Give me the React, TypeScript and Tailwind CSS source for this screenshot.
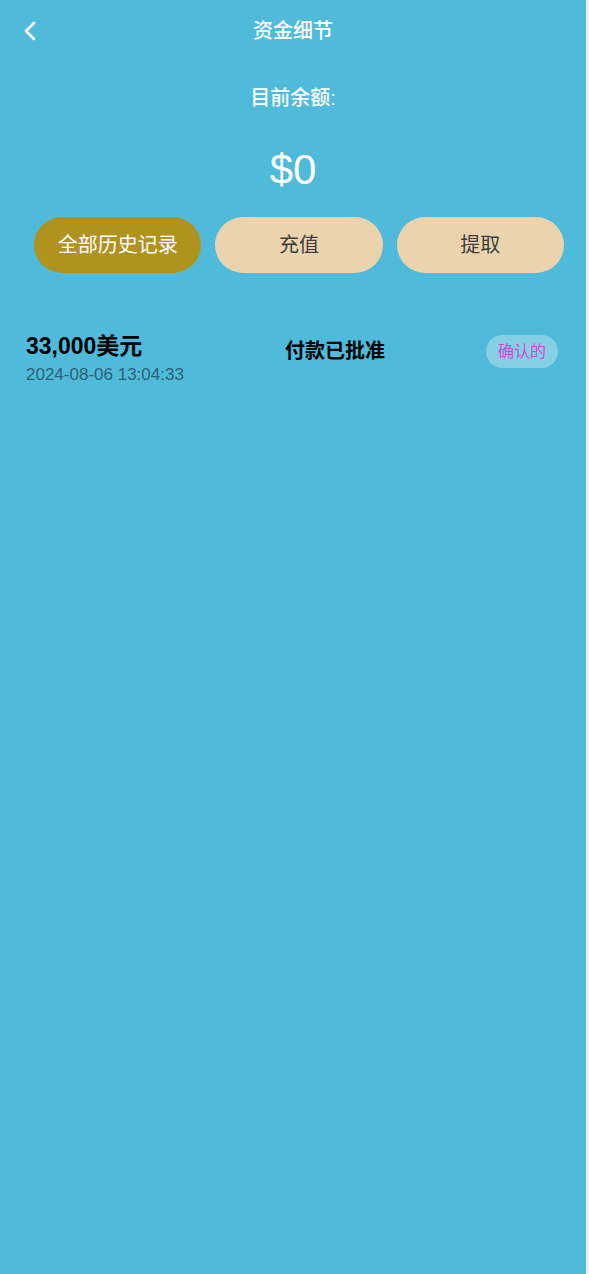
import React from "react";

const FONT = { fontFamily: '"Liberation Sans", Arial, "Noto Sans CJK SC", sans-serif' };

const records = [
  { amount: "33,000美元", time: "2024-08-06 13:04:33", status: "付款已批准", tag: "确认的" },
];

const App = () => {
  return (
    <div className="flex min-h-[1274px] w-full bg-[#eef0f3]" style={FONT}>
      <div className="w-[586px] min-h-[1274px] bg-[#4fbad9]">
        {/* header */}
        <div className="relative flex h-[62px] items-center justify-center">
          <button className="absolute left-[22px] top-[20px] text-white">
            <svg width="18" height="22" viewBox="0 0 18 22" fill="none">
              <path d="M12 3 L4 11 L12 19" stroke="white" strokeWidth="2.6" strokeLinecap="round" strokeLinejoin="round" />
            </svg>
          </button>
          <h1 className="text-[20px] font-medium text-white">资金细节</h1>
        </div>

        <div className="mt-[21px] text-center text-[20px] font-medium text-white">目前余额:</div>
        <div className="mt-[36px] text-center text-[42px] leading-none text-white">$0</div>

        <div className="mt-[26px] flex gap-[14px] pl-[34px] pr-[22px]">
          <button className="h-[56px] flex-1 rounded-full bg-[#b0921f] text-[20px] text-white">全部历史记录</button>
          <button className="h-[56px] flex-1 rounded-full bg-[#ebd4ad] text-[20px] text-[#3d3d3d]">充值</button>
          <button className="h-[56px] flex-1 rounded-full bg-[#ebd4ad] text-[20px] text-[#3d3d3d]">提取</button>
        </div>

        <div className="mt-[60px]">
          {records.map(r => (
            <div key={r.time} className="flex items-start justify-between pl-[26px] pr-[28px]">
              <div>
                <div className="text-[23px] font-bold leading-[26px] text-black">{r.amount}</div>
                <div className="mt-[5px] text-[17px] leading-[22px] text-[#2a6275]">{r.time}</div>
              </div>
              <div className="mt-[4px] text-[20px] font-bold leading-[28px] text-black">{r.status}</div>
              <div className="mt-[2px] rounded-full bg-[#86d0e6] px-[12px] py-[6px] text-[16px] leading-[21px] text-[#c84bd4]">{r.tag}</div>
            </div>
          ))}
        </div>
      </div>
    </div>
  );
};

export default App;
